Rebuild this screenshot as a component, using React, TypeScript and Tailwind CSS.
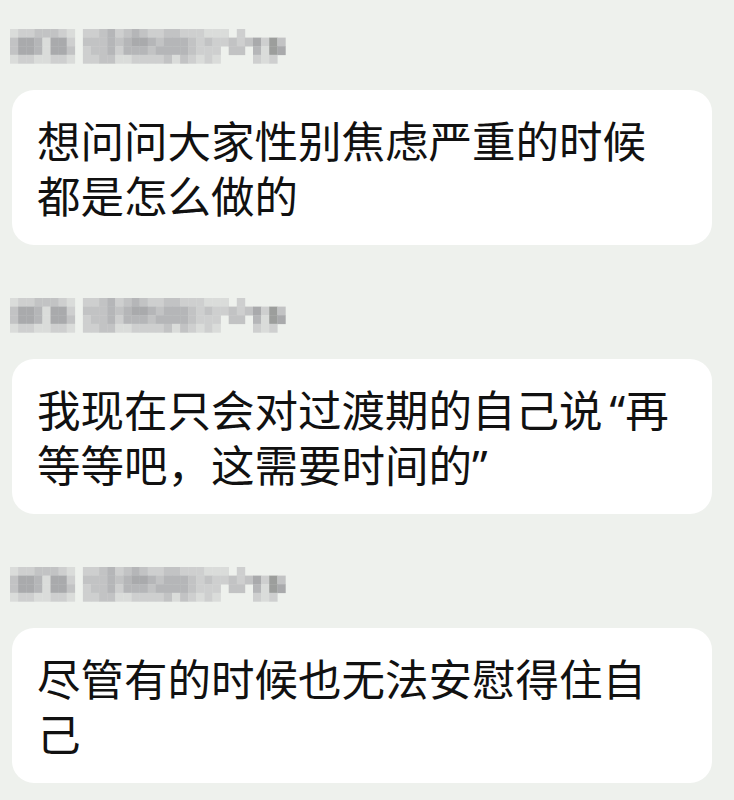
import React from "react";

const PALETTE: Record<string, string> = {
  "0": "transparent",
  "1": "#dadcda",
  "2": "#cecfcf",
  "3": "#c2c3c4",
  "4": "#b5b6b8",
  "5": "#a9aaac",
  "6": "#9c9e9c",
};

// 4 rows x 35 cols mosaic (8px cells) standing for the redacted name/time line
const MOSAIC = [
  "12233321022342343223322211102000000",
  "35541552033343455434443232232352630",
  "35541553023342444344443222033041650",
  "12211221022331122223132121000021200",
];

function Mosaic() {
  const cw = 8.1;
  const ch = 8.6;
  return (
    <svg width={284} height={35} viewBox="0 0 284 35" className="block">
      {MOSAIC.map((row, r) =>
        row.split("").map((c, i) =>
          c === "0" ? null : (
            <rect
              key={`${r}-${i}`}
              x={i * cw}
              y={r * ch}
              width={cw + 0.3}
              height={ch + 0.3}
              fill={PALETTE[c]}
            />
          )
        )
      )}
    </svg>
  );
}

function Q({ c, open }: { c: string; open?: boolean }) {
  return (
    <span className={`${open ? "ml-[7px]" : ""} leading-none [font-family:'Noto_Sans',sans-serif]`}>{c}</span>
  );
}

function Message({ lines, className }: { lines: React.ReactNode[]; className?: string }) {
  return (
    <div className={className}>
      <div className="ml-[10px]">
        <Mosaic />
      </div>
      <div className="mt-[26px] ml-[12px] w-[700px] rounded-[22px] bg-white pl-[25px] pr-[20px] pt-[22px] pb-[23px]">
        <div className="text-[43.5px] leading-[55px] text-[#111111] whitespace-nowrap [font-family:'Noto_Sans_CJK_SC',sans-serif]">
          {lines.map((l, i) => (
            <div key={i} className="h-[55px]">{l}</div>
          ))}
        </div>
      </div>
    </div>
  );
}

export default function App() {
  return (
    <div className="w-[734px] h-[800px] overflow-hidden bg-[#eef1ed] pt-[29px]">
      <Message lines={["想问问大家性别焦虑严重的时候", "都是怎么做的"]} />
      <Message
        className="mt-[53px]"
        lines={[
          <>我现在只会对过渡期的自己说<Q c="“" open />再</>,
          <>等等吧，这需要时间的<Q c="”" /></>,
        ]}
      />
      <Message className="mt-[53px]" lines={["尽管有的时候也无法安慰得住自", "己"]} />
    </div>
  );
}
